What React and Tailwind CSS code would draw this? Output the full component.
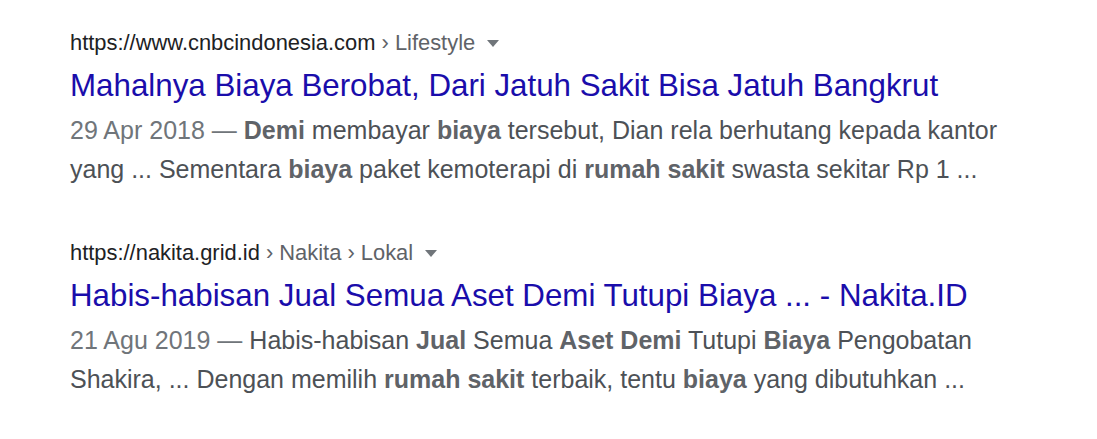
const RESULTS = [
  {
    url: 'https://www.cnbcindonesia.com',
    crumbs: ['Lifestyle'],
    title: 'Mahalnya Biaya Berobat, Dari Jatuh Sakit Bisa Jatuh Bangkrut',
    date: '29 Apr 2018',
    snippet: [
      ['b', 'Demi'], ['', ' membayar '], ['b', 'biaya'], ['', ' tersebut, Dian rela berhutang kepada kantor yang ... Sementara '],
      ['b', 'biaya'], ['', ' paket kemoterapi di '], ['b', 'rumah sakit'], ['', ' swasta sekitar Rp 1 ...'],
    ],
  },
  {
    url: 'https://nakita.grid.id',
    crumbs: ['Nakita', 'Lokal'],
    title: 'Habis-habisan Jual Semua Aset Demi Tutupi Biaya ... - Nakita.ID',
    date: '21 Agu 2019',
    snippet: [
      ['', 'Habis-habisan '], ['b', 'Jual'], ['', ' Semua '], ['b', 'Aset Demi'], ['', ' Tutupi '], ['b', 'Biaya'],
      ['', ' Pengobatan Shakira, ... Dengan memilih '], ['b', 'rumah sakit'], ['', ' terbaik, tentu '], ['b', 'biaya'],
      ['', ' yang dibutuhkan ...'],
    ],
  },
];

function Result({ r }) {
  return (
    <div className="w-[965px]">
      <div className="flex items-center h-[30px] text-[21.9px] leading-[30px]">
        <span className="text-[#202124]">{r.url}</span>
        {r.crumbs.map(c => (
          <span key={c} className="text-[#5f6368]">&nbsp;›&nbsp;{c}</span>
        ))}
        <span className="ml-[12px] mt-[1px] w-0 h-0 border-l-[6px] border-r-[6px] border-t-[7px] border-l-transparent border-r-transparent border-t-[#70757a]" />
      </div>
      <h3 className="mt-[9px] text-[31.3px] leading-[38px] text-[#1a0dab]">{r.title}</h3>
      <p className="mt-[6px] text-[25px] leading-[39px] text-[#4d5156]">
        <span className="text-[#70757a]">{r.date} — </span>
        {r.snippet.map(([k, t], i) => k ? <b key={i} className="font-bold text-[#5f6368]">{t}</b> : <span key={i}>{t}</span>)}
      </p>
    </div>
  );
}

export default function App() {
  return (
    <div className="w-[1097px] h-[439px] bg-white px-[70px] pt-[28px] font-['Liberation_Sans',Arial,sans-serif]">
      <div className="flex flex-col gap-[49px]">
        {RESULTS.map(r => <Result key={r.url} r={r} />)}
      </div>
    </div>
  );
}
